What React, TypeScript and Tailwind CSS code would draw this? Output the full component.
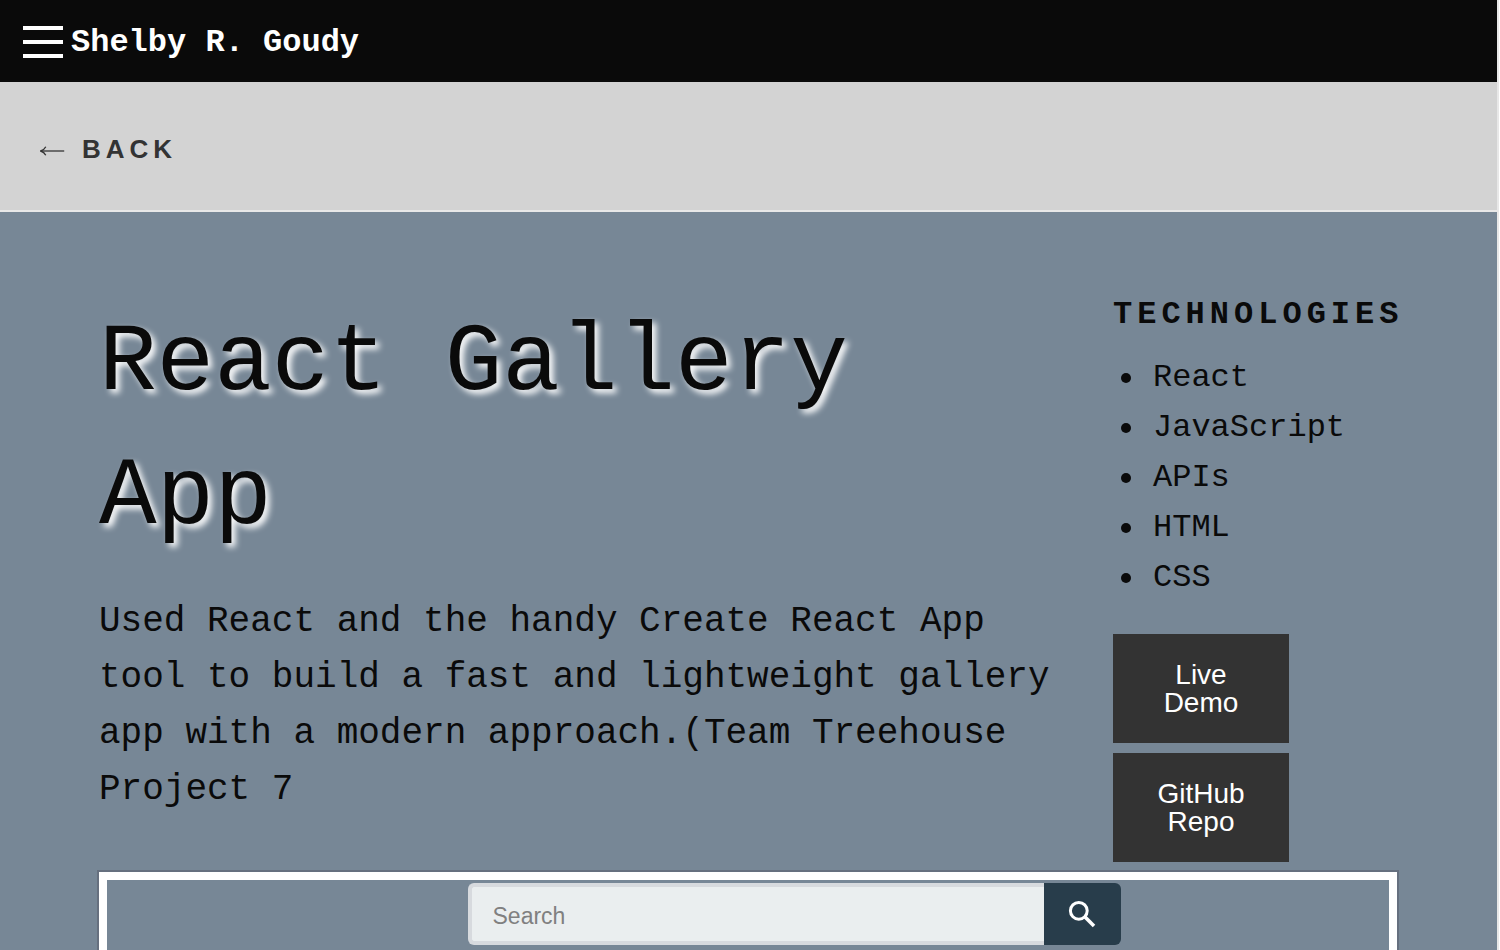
const technologies = ["React", "JavaScript", "APIs", "HTML", "CSS"];

function Header() {
  return (
    <header className="flex h-[82px] shrink-0 items-center gap-2 bg-[#0a0a0a] pl-[23px] text-white">
      <button type="button" aria-label="Open menu" className="flex w-10 flex-col gap-[10px] pt-[2px]">
        <span className="h-1 w-full bg-white" />
        <span className="h-1 w-full bg-white" />
        <span className="h-1 w-full bg-white" />
      </button>
      <a href="#home" className="pt-1 text-[32px] leading-9 font-bold">
        Shelby R. Goudy
      </a>
    </header>
  );
}

function BackBar() {
  return (
    <nav className="flex h-[130px] shrink-0 items-center border-b-2 border-[#e8e8e8] bg-[#d3d3d3] px-10 pt-[6px]">
      <a
        href="#projects"
        className="flex items-center gap-[17px] font-['Liberation_Sans',sans-serif] text-[26px] leading-8 text-[#333333]"
      >
        <svg viewBox="0 0 25 10" className="mt-1 h-[10px] w-[25px]" fill="none" stroke="#333333" aria-hidden="true">
          <path d="M1 5 H24.2" strokeWidth="1.3" />
          <path d="M5.8 0.8 Q4.2 4 0.6 5 Q4.2 6 5.8 9.2" strokeWidth="1.3" />
        </svg>
        <span className="font-bold tracking-[5px]">BACK</span>
      </a>
    </nav>
  );
}

function ProjectButton({ href, label }: { href: string; label: string }) {
  return (
    <a
      href={href}
      className="flex h-[109px] w-44 items-center justify-center bg-[#333333] px-10 text-center font-['Liberation_Sans',sans-serif] text-[28px] leading-7 text-white"
    >
      {label}
    </a>
  );
}

function SearchPreview() {
  return (
    <form className="mx-auto flex h-[62px] w-[653px] rounded-md">
      <input
        type="text"
        aria-label="Search"
        placeholder="Search"
        className="min-w-0 flex-1 rounded-l-md border-4 border-r-0 border-[#d7dade] bg-[#eaeeef] pt-1 pl-[21px] font-['Liberation_Sans',sans-serif] text-[23px] leading-8 text-[#333333] placeholder:text-[#808080]"
      />
      <button
        type="submit"
        aria-label="Submit search"
        className="flex w-[77px] items-center justify-center rounded-r-md bg-[#283d4b]"
      >
        <svg viewBox="0 0 28 28" className="size-7" fill="none" stroke="white">
          <circle cx="10.8" cy="10.8" r="8.4" strokeWidth="3" />
          <path d="M16.8 16.8 L26 26" strokeWidth="3.6" />
        </svg>
      </button>
    </form>
  );
}

export default function App() {
  return (
    <div className="h-screen overflow-y-auto bg-white pr-px [scrollbar-width:none]">
      <div className="flex min-h-full flex-col border-r-2 border-[#e8e8e8] bg-[#778796] font-['Liberation_Mono',monospace] text-[#0a0a0a]">
        <Header />
        <BackBar />
        <main className="pt-[85px] pr-[100px] pb-20 pl-[99px]">
          <div className="grid grid-cols-[minmax(0,1fr)_284px] gap-x-[60px]">
            <section>
              <h1 className="text-8xl leading-[134px] [text-shadow:4px_4px_6px_white]">React Gallery App</h1>
              <p className="mt-[29px] text-4xl leading-[56px]">
                Used React and the handy Create React App tool to build a fast and lightweight gallery app with a
                modern approach.(Team Treehouse Project 7
              </p>
            </section>
            <aside>
              <h2 className="text-[32px] leading-9 font-bold tracking-[5px]">TECHNOLOGIES</h2>
              <ul className="mt-5 pl-2 text-[32px] leading-[50px]">
                {technologies.map((name) => (
                  <li
                    key={name}
                    className="flex items-center gap-[22px] before:size-[10px] before:rounded-full before:bg-[#0a0a0a]"
                  >
                    {name}
                  </li>
                ))}
              </ul>
              <div className="mt-[31px] flex flex-col gap-[10px]">
                <ProjectButton href="#demo" label="Live Demo" />
                <ProjectButton href="#repo" label="GitHub Repo" />
              </div>
            </aside>
          </div>
          <div className="mt-[10px] min-h-[720px] border-8 border-white pt-[3px] pl-[92px] ring-2 ring-[#66707f]">
            <SearchPreview />
          </div>
        </main>
      </div>
    </div>
  );
}
